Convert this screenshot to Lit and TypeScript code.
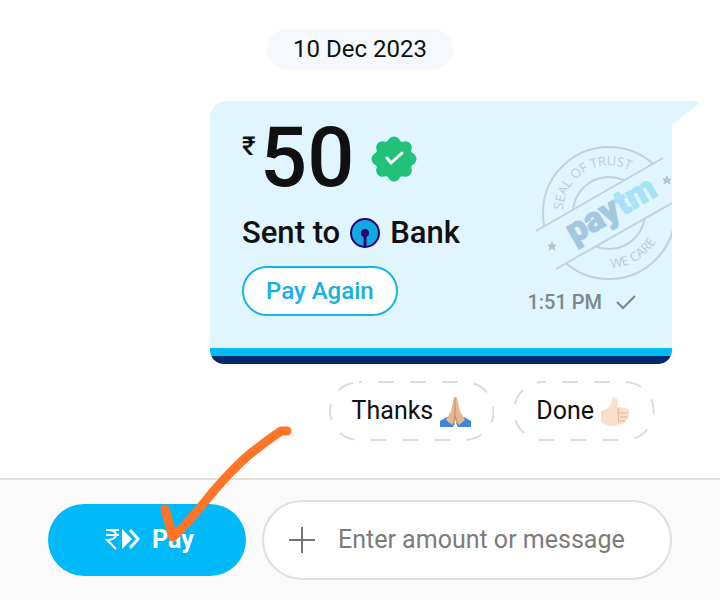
import { LitElement, html, css, svg } from "lit";
import { customElement, property } from "lit/decorators.js";

/** Rounded suggestion chip with a long-dash outline. */
@customElement("reply-chip")
class ReplyChip extends LitElement {
  @property() label = "";
  @property() icon = "";

  static styles = css`
    :host { display: block; }
    .chip {
      position: relative;
      display: flex;
      align-items: center;
      gap: 7px;
      height: 60px;
      padding: 0 23px;
      border: 0;
      background: none;
      font: 400 25px/32px Roboto, sans-serif;
      color: #101010;
      cursor: pointer;
    }
    .outline {
      position: absolute;
      inset: 0;
      width: 100%;
      height: 100%;
    }
    .outline rect {
      x: 1px;
      y: 1px;
      width: calc(100% - 2px);
      height: calc(100% - 2px);
      fill: none;
      stroke: #dcdcdc;
      stroke-width: 2;
      stroke-dasharray: 16 16;
      stroke-dashoffset: -19;
    }
    .emoji { display: block; width: 31px; height: 31px; }
  `;

  private hands() {
    return svg`
      <path d="M0 25 L7 21 L15 27 L13 31 H0Z M31 25 L24 21 L16 27 L18 31 H31Z" fill="#3f86dc"/>
      <path d="M14 2 Q15 0 17 2 L20 15 L25 24 L19 29 L15 25 L12 29 L6 24 L11 15Z" fill="#e6b890"/>
      <path d="M15 2 V20 L13 28 M15 20 L18 28" fill="none" stroke="#c08c64" stroke-width="1"/>`;
  }

  private thumb() {
    return svg`
      <path d="M0 15 Q8 13 10 8 L11 3 Q12 0 15 2 Q18 6 16 11 L25 12 Q29 13 28 16 Q29 19 27 20 Q28 23 25 24 Q25 28 21 28 L12 30 Q5 30 0 26Z" fill="#fadfca"/>
      <path d="M26 17 H18 M27 21 H19 M24 25 H19 M18 12 Q16 15 18 27" fill="none" stroke="#e2b394" stroke-width="1"/>`;
  }

  render() {
    return html`<button class="chip" type="button">
      <svg class="outline" aria-hidden="true"><rect rx="29" ry="29"></rect></svg>
      <span>${this.label}</span>
      <svg class="emoji" viewBox="0 0 31 31" aria-hidden="true">
        ${this.icon === "hands" ? this.hands() : this.thumb()}
      </svg>
    </button>`;
  }
}

@customElement("app-root")
class AppRoot extends LitElement {
  static styles = css`
    * { box-sizing: border-box; }
    :host {
      display: flex;
      flex-direction: column;
      min-height: 100vh;
      background: #fff;
      color: #101010;
      font-family: Roboto, "Noto Sans", sans-serif;
    }
    main {
      flex: 1;
      display: flex;
      flex-direction: column;
      padding: 29px 48px 36px;
    }
    .date {
      align-self: center;
      padding: 4px 26px;
      border-radius: 20px;
      background: #f5f8fd;
      font-size: 24px;
      font-weight: 400;
      line-height: 32px;
    }
    .bubble {
      position: relative;
      margin: 32px 0 0 162px;
      padding: 24px 32px 48px;
      border-radius: 16px 0 14px 14px;
      background: linear-gradient(to top, #002970 8px, #00b9f5 8px 16px, #e0f5fd 16px);
    }
    .tail {
      position: absolute;
      left: 100%;
      top: 0;
      width: 27px;
      height: 24px;
    }
    .amount { display: flex; align-items: flex-start; height: 68px; }
    .rupee { width: 18px; font: 500 26px/42px Roboto, "Noto Sans", sans-serif; }
    .value { font-size: 83px; font-weight: 500; line-height: 66px; }
    .badge { width: 46px; height: 46px; margin: 11px 0 0 17px; }
    .sent {
      display: flex;
      align-items: center;
      gap: 10px;
      margin: 22px 0 15px;
      font-size: 31px;
      font-weight: 500;
      line-height: 36px;
    }
    .bank { width: 30px; height: 30px; }
    .row { display: flex; align-items: flex-start; justify-content: space-between; }
    .again {
      height: 50px;
      padding: 0 22px;
      border: 2px solid #18b4e2;
      border-radius: 25px;
      background: #fff;
      color: #18b0de;
      font: 500 24px/28px Roboto, sans-serif;
      cursor: pointer;
    }
    .time {
      display: flex;
      align-items: center;
      gap: 14px;
      margin: 24px 4px 0 0;
      color: #7d878c;
      font-size: 20px;
      font-weight: 500;
      line-height: 24px;
    }
    .tick { width: 20px; height: 16px; }
    .stamp {
      position: absolute;
      right: 0;
      top: 40px;
      width: 140px;
      height: 144px;
    }
    .ring { fill: none; stroke: #bcd4e2; stroke-width: 2; }
    .seal { fill: #b6cedd; font: 500 13px "Open Sans", sans-serif; }
    .brand {
      font: 900 35px Roboto, sans-serif;
      fill: #a6c8df;
      stroke: #a6c8df;
      stroke-width: 1;
    }
    .brand-end { fill: #a8e2f8; stroke: #a8e2f8; }
    .replies {
      display: flex;
      justify-content: flex-end;
      gap: 19px;
      margin: 17px 17px 0 0;
    }
    footer {
      display: flex;
      align-items: center;
      gap: 16px;
      padding: 20px 48px;
      border-top: 2px solid #e0e0e0;
      background: #fafafa;
    }
    .action { position: relative; }
    .pay {
      display: flex;
      align-items: center;
      justify-content: center;
      gap: 12px;
      width: 198px;
      height: 72px;
      padding: 0 0 0 4px;
      border: 0;
      border-radius: 36px;
      background: #00b9f9;
      color: #fff;
      font: 700 25px/32px Roboto, sans-serif;
      cursor: pointer;
    }
    .payicon { width: 36px; height: 24px; }
    .mark {
      position: absolute;
      left: 110px;
      bottom: 28px;
      width: 140px;
      height: 126px;
      pointer-events: none;
    }
    .entry {
      flex: 1;
      min-width: 0;
      display: flex;
      align-items: center;
      gap: 22px;
      height: 80px;
      padding: 0 24px;
      border: 2px solid #dfdfdf;
      border-radius: 40px;
      background: #fff;
    }
    .add {
      flex: none;
      width: 28px;
      height: 28px;
      padding: 0;
      border: 0;
      background: none;
    }
    .add svg { display: block; width: 28px; height: 28px; }
    .text {
      flex: 1;
      min-width: 0;
      padding: 0;
      border: 0;
      outline: 0;
      background: none;
      color: #101010;
      font: 400 25px/32px Roboto, sans-serif;
    }
    .text::placeholder { color: #7b7b7b; opacity: 1; }
  `;

  private stamp() {
    return html`<svg class="stamp" viewBox="532 141 140 144" role="img" aria-label="Seal of trust">
      <circle class="ring" cx="609" cy="213" r="66"></circle>
      <circle class="ring" cx="609" cy="213" r="36"></circle>
      <path d="M536 231 L690 142 L690 192 L556 269Z" fill="#e0f5fd"></path>
      <path class="ring" d="M536 231 L663 158 M556 269 L672 203"></path>
      <path id="upper" d="M563 210 A46 46 0 0 1 655 213" fill="none"></path>
      <path id="lower" d="M611 268 A55 55 0 0 0 664 213" fill="none"></path>
      <text class="seal"><textPath href="#upper">SEAL OF TRUST</textPath></text>
      <text class="seal"><textPath href="#lower">WE CARE</textPath></text>
      <path d="M552 242 l1 3 3 0 -2 2 1 3 -3 -2 -3 2 1 -3 -2 -2 3 0Z M667 176 l1 3 3 0 -2 2 1 3 -3 -2 -3 2 1 -3 -2 -2 3 0Z" fill="#aac8dc" stroke="#aac8dc"></path>
      <text class="brand" transform="translate(574 244) rotate(-30)">pay<tspan class="brand-end">tm</tspan></text>
    </svg>`;
  }

  render() {
    const petals = [0, 45, 90, 135, 180, 225, 270, 315].map((a) => {
      const r = (a * Math.PI) / 180;
      return svg`<circle cx=${23 + 16 * Math.cos(r)} cy=${23 + 16 * Math.sin(r)} r="6.5"></circle>`;
    });
    return html`
      <main>
        <div class="date">10 Dec 2023</div>
        <section class="bubble">
          <svg class="tail" viewBox="0 0 27 24" aria-hidden="true">
            <path d="M0 0 H25 Q28 2 25 4 L0 24Z" fill="#e0f5fd"></path>
          </svg>
          ${this.stamp()}
          <div class="amount">
            <span class="rupee">₹</span><span class="value">50</span>
            <svg class="badge" viewBox="0 0 46 46" role="img" aria-label="Verified">
              <g fill="#21c17a">${petals}<circle cx="23" cy="23" r="19"></circle></g>
              <path d="M16 22 L20 27 L31 17" fill="none" stroke="#fff" stroke-width="3" stroke-linecap="round" stroke-linejoin="round"></path>
            </svg>
          </div>
          <div class="sent">
            <span>Sent to</span>
            <svg class="bank" viewBox="0 0 30 30" role="img" aria-label="SBI">
              <circle cx="15" cy="15" r="14" fill="#12a8e0" stroke="#280071" stroke-width="2"></circle>
              <circle cx="15" cy="15" r="4" fill="#280071"></circle>
              <path d="M15 15 V29" stroke="#280071" stroke-width="3"></path>
            </svg>
            <span>Bank</span>
          </div>
          <div class="row">
            <button class="again" type="button">Pay Again</button>
            <div class="time">
              <span>1:51 PM</span>
              <svg class="tick" viewBox="0 0 20 16" aria-hidden="true">
                <path d="M1 8 L7 14 L19 2" fill="none" stroke="#7d878c" stroke-width="2"></path>
              </svg>
            </div>
          </div>
        </section>
        <div class="replies">
          <reply-chip label="Thanks" icon="hands"></reply-chip>
          <reply-chip label="Done" icon="thumb"></reply-chip>
        </div>
      </main>
      <footer>
        <div class="action">
          <button class="pay" type="button">
            <svg class="payicon" viewBox="0 0 36 24" aria-hidden="true">
              <path d="M2 2 H15 M2 7 H15 M2 2 H6 Q12 3 12 7 Q11 12 3 12 L12 21" fill="none" stroke="#fff" stroke-width="2"></path>
              <path d="M18 1 L28 11 L18 21Z" fill="#fff"></path>
              <path d="M26 2 L34 11 L26 20" fill="none" stroke="#fff" stroke-width="3"></path>
            </svg>
            <span>Pay</span>
          </button>
          <svg class="mark" viewBox="158 422 140 126" aria-hidden="true">
            <path d="M165 509 L173 537 Q185 526 203 504 Q222 480 241 462 Q255 449 281 431 L287 431" fill="none" stroke="#ff7426" stroke-width="9" stroke-linecap="round" stroke-linejoin="round"></path>
          </svg>
        </div>
        <div class="entry">
          <button class="add" type="button" aria-label="Add attachment">
            <svg viewBox="0 0 28 28" aria-hidden="true">
              <path d="M14 1 V27 M1 14 H27" stroke="#757575" stroke-width="2"></path>
            </svg>
          </button>
          <input class="text" type="text" placeholder="Enter amount or message" aria-label="Enter amount or message" />
        </div>
      </footer>
    `;
  }
}
